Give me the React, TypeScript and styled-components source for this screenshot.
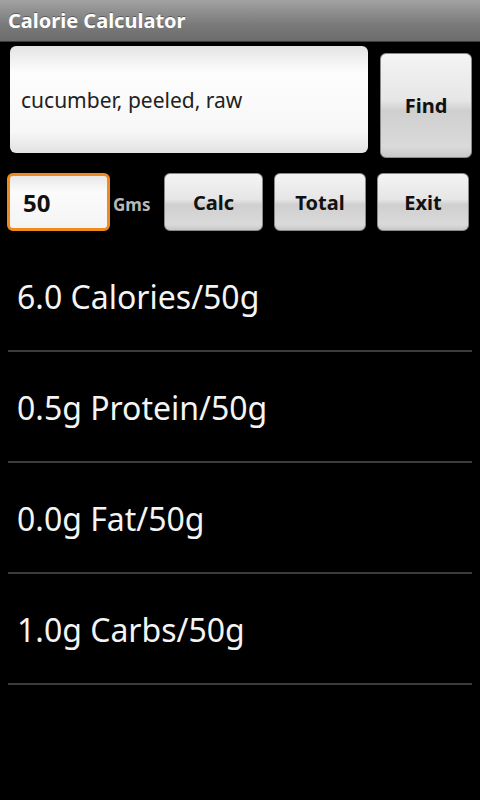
import React from "react";
import styled, { createGlobalStyle } from "styled-components";

const GlobalStyle = createGlobalStyle`
  html, body {
    margin: 0;
    padding: 0;
    background: #000;
  }
  body {
    font-family: "Noto Sans", "Open Sans", sans-serif;
  }
`;

const Screen = styled.div`
  width: 480px;
  height: 800px;
  background: #000;
  overflow: hidden;
`;

const TitleBar = styled.div`
  height: 41px;
  padding-left: 8px;
  display: flex;
  align-items: center;
  background: linear-gradient(#a2a2a2, #7a7a7a 60%, #6c6c6c);
  border-bottom: 1px solid #3a3a3a;
  color: #fff;
  font-weight: 700;
  font-size: 20px;
  text-shadow: 0 -1px 0 rgba(0, 0, 0, 0.35);
`;

const SearchRow = styled.div`
  display: flex;
  align-items: flex-start;
  gap: 12px;
  padding: 4px 8px 0 10px;
`;

const SearchField = styled.div`
  width: 358px;
  height: 107px;
  box-sizing: border-box;
  padding-left: 11px;
  display: flex;
  align-items: center;
  border-radius: 6px;
  background: linear-gradient(#e4e4e4, #fdfdfd 25%, #f7f7f7 80%, #e2e2e2);
  color: #222;
  font-size: 21px;
`;

const Button = styled.div<{ $w: number; $h: number; $top?: number }>`
  width: ${(p) => p.$w}px;
  height: ${(p) => p.$h}px;
  margin-top: ${(p) => p.$top ?? 0}px;
  box-sizing: border-box;
  display: flex;
  align-items: center;
  justify-content: center;
  border-radius: 6px;
  border: 1px solid #8a8a8a;
  background: linear-gradient(#f4f4f4, #e6e6e6 45%, #cfcfcf 55%, #dadada 90%, #c8c8c8);
  color: #111;
  font-weight: 700;
  font-size: 20px;
`;

const ControlRow = styled.div`
  display: flex;
  align-items: center;
  padding: 15px 0 0 7px;
`;

const Amount = styled.div`
  width: 103px;
  height: 58px;
  box-sizing: border-box;
  padding-left: 13px;
  display: flex;
  align-items: center;
  border: 3px solid #f08a1c;
  border-radius: 6px;
  background: linear-gradient(#e8e8e8, #fbfbfb 30%, #f4f4f4);
  color: #111;
  font-weight: 700;
  font-size: 24px;
`;

const Unit = styled.span`
  width: 54px;
  padding-left: 3px;
  padding-top: 5px;
  box-sizing: border-box;
  color: #b8b8b8;
  font-weight: 700;
  font-size: 17px;
`;

const Buttons = styled.div`
  display: flex;
  gap: 11px;
`;

const Results = styled.div`
  padding: 10px 8px 0 8px;
`;

const ResultRow = styled.div`
  height: 111px;
  box-sizing: border-box;
  display: flex;
  align-items: center;
  padding: 2px 0 0 9px;
  border-bottom: 2px solid #3c3c3c;
  color: #f4f4f4;
  font-size: 32px;
`;

const results = ["6.0 Calories/50g", "0.5g Protein/50g", "0.0g Fat/50g", "1.0g Carbs/50g"];

export default function App() {
  return (
    <Screen>
      <GlobalStyle />
      <TitleBar>Calorie Calculator</TitleBar>
      <SearchRow>
        <SearchField>cucumber, peeled, raw</SearchField>
        <Button $w={92} $h={105} $top={7}>
          Find
        </Button>
      </SearchRow>
      <ControlRow>
        <Amount>50</Amount>
        <Unit>Gms</Unit>
        <Buttons>
          <Button $w={99} $h={58}>Calc</Button>
          <Button $w={92} $h={58}>Total</Button>
          <Button $w={92} $h={58}>Exit</Button>
        </Buttons>
      </ControlRow>
      <Results>
        {results.map((r) => (
          <ResultRow key={r}>{r}</ResultRow>
        ))}
      </Results>
    </Screen>
  );
}
